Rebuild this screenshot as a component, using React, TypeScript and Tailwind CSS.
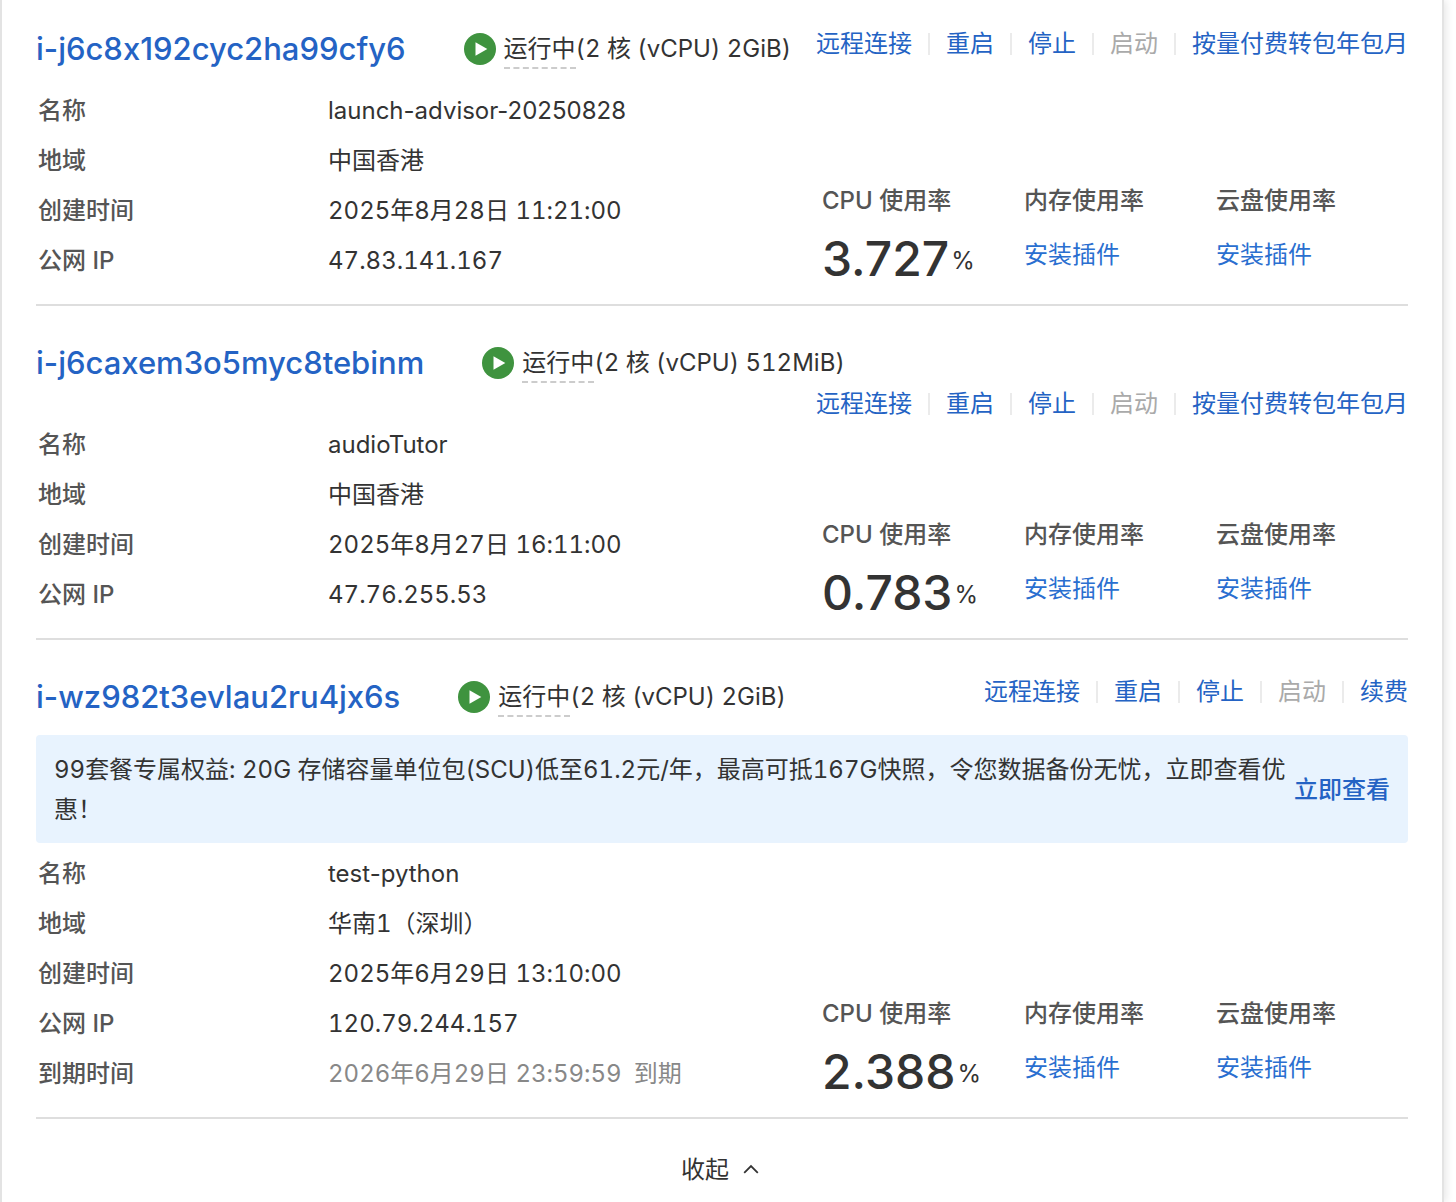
import { Fragment, type ReactNode } from "react";

type Instance = {
  id: string;
  name: string;
  spec: string;
  actions: { text: string; disabled?: boolean }[];
  promo?: string;
  details: { label: string; value: ReactNode; muted?: boolean }[];
  cpu: string;
};

const baseActions = [
  { text: "远程连接" },
  { text: "重启" },
  { text: "停止" },
  { text: "启动", disabled: true },
];

const instances: Instance[] = [
  {
    id: "i-j6c8x192cyc2ha99cfy6",
    name: "launch-advisor-20250828",
    spec: "(2 核 (vCPU) 2GiB)",
    actions: [...baseActions, { text: "按量付费转包年包月" }],
    details: [
      { label: "地域", value: "中国香港" },
      { label: "创建时间", value: "2025年8月28日 11:21:00" },
      { label: "公网 IP", value: "47.83.141.167" },
    ],
    cpu: "3.727",
  },
  {
    id: "i-j6caxem3o5myc8tebinm",
    name: "audioTutor",
    spec: "(2 核 (vCPU) 512MiB)",
    actions: [...baseActions, { text: "按量付费转包年包月" }],
    details: [
      { label: "地域", value: "中国香港" },
      { label: "创建时间", value: "2025年8月27日 16:11:00" },
      { label: "公网 IP", value: "47.76.255.53" },
    ],
    cpu: "0.783",
  },
  {
    id: "i-wz982t3evlau2ru4jx6s",
    name: "test-python",
    spec: "(2 核 (vCPU) 2GiB)",
    actions: [...baseActions, { text: "续费" }],
    promo:
      "99套餐专属权益: 20G 存储容量单位包(SCU)低至61.2元/年，最高可抵167G快照，令您数据备份无忧，立即查看优惠！",
    details: [
      { label: "地域", value: "华南1（深圳）" },
      { label: "创建时间", value: "2025年6月29日 13:10:00" },
      { label: "公网 IP", value: "120.79.244.157" },
      {
        label: "到期时间",
        value: (
          <>
            2026年6月29日 23:59:59<span className="ml-3">到期</span>
          </>
        ),
        muted: true,
      },
    ],
    cpu: "2.388",
  },
];

function RunningIcon() {
  return (
    <svg viewBox="0 0 32 32" className="size-8 shrink-0" aria-hidden="true">
      <circle cx="16" cy="16" r="16" fill="#3f933f" />
      <path d="M11.5 9.3v13.4L23.3 16z" fill="#fff" />
    </svg>
  );
}

function Metric({ label, children }: { label: string; children: ReactNode }) {
  return (
    <div>
      <dt className="font-medium leading-10 text-[#555]">{label}</dt>
      <dd className="h-[65px]">{children}</dd>
    </div>
  );
}

function InstanceItem({ item }: { item: Instance }) {
  return (
    <article className="border-b-2 border-[#dedede] pt-9 pb-[18px] first:pt-7">
      <header className="flex min-h-[58px] flex-wrap content-start items-start gap-y-1">
        <div className="flex h-[42px] items-center whitespace-nowrap">
          <a href="#" className="text-[31px] font-medium leading-10 text-[#2463c4]">
            {item.id}
          </a>
          <div className="ml-[58px] flex items-center gap-2">
            <RunningIcon />
            <p className="leading-10 tabular-nums">
              <span className="border-b-2 border-dashed border-[#ccc] pb-1">运行中</span>
              {item.spec}
            </p>
          </div>
        </div>
        <div className="ml-auto flex h-8 items-center whitespace-nowrap">
          {item.actions.map((action, i) => (
            <Fragment key={action.text}>
              {i > 0 && <span className="mx-4 h-[22px] w-0.5 bg-[#ebebeb]" />}
              <button
                type="button"
                disabled={action.disabled}
                className="leading-8 text-[#2463c4] disabled:text-[#aaa]"
              >
                {action.text}
              </button>
            </Fragment>
          ))}
        </div>
      </header>
      {item.promo && (
        <div className="mt-px mb-1.5 flex items-center justify-between gap-2 rounded bg-[#e8f3fe] px-[18px] pt-[15px] pb-[13px]">
          <p className="leading-10 tabular-nums">{item.promo}</p>
          <a href="#" className="shrink-0 font-medium text-[#2463c4]">
            立即查看
          </a>
        </div>
      )}
      <div className="flex items-end justify-between">
        <dl className="pl-0.5">
          <div className="flex leading-[50px]">
            <dt className="w-[290px] font-medium text-[#555]">名称</dt>
            <dd>{item.name}</dd>
          </div>
          {item.details.map((row) => (
            <div key={row.label} className="flex leading-[50px] tabular-nums">
              <dt className="w-[290px] font-medium text-[#555]">{row.label}</dt>
              <dd className={row.muted ? "text-[#888]" : ""}>{row.value}</dd>
            </div>
          ))}
        </dl>
        <dl className="grid grid-cols-[202px_192px_192px]">
          <Metric label="CPU 使用率">
            <span className="flex h-[76px] items-center gap-0.5">
              <span className="text-5xl font-medium">{item.cpu}</span>
              <span className="pt-1">%</span>
            </span>
          </Metric>
          <Metric label="内存使用率">
            <a href="#" className="leading-[68px] text-[#2a6fd0]">安装插件</a>
          </Metric>
          <Metric label="云盘使用率">
            <a href="#" className="leading-[68px] text-[#2a6fd0]">安装插件</a>
          </Metric>
        </dl>
      </div>
    </article>
  );
}

export default function App() {
  return (
    <main className="min-h-screen bg-white pr-3 font-['Inter','Noto_Sans_CJK_SC',sans-serif] text-2xl text-[#333] [font-feature-settings:'calt'_0]">
      <section className="min-h-screen border-x-2 border-[#e3e3e3] bg-white px-[34px] shadow-[2px_0_8px_rgba(0,0,0,0.1)]">
        <div>
          {instances.map((item) => (
            <InstanceItem key={item.id} item={item} />
          ))}
        </div>
        <div className="flex justify-center pt-[31px] pr-1">
          <button type="button" className="flex items-center gap-3.5 leading-10">
            收起
            <svg viewBox="0 0 16 12" className="h-3 w-4" fill="none" stroke="#333" strokeWidth="1.8" aria-hidden="true">
              <path d="M1.2 8.8L8 2l6.8 6.8" />
            </svg>
          </button>
        </div>
      </section>
    </main>
  );
}
